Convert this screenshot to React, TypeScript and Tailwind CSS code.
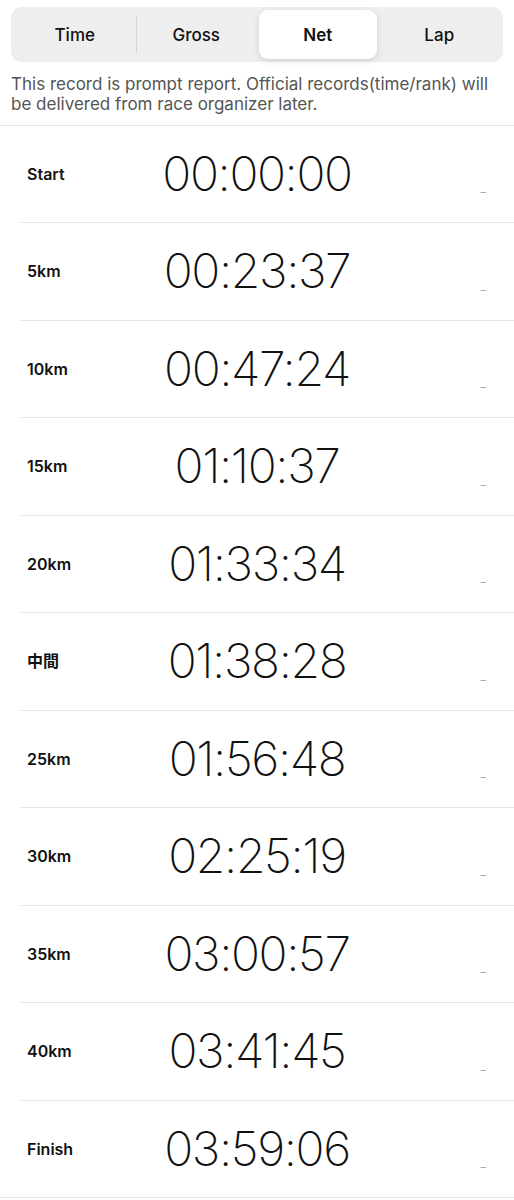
import { useState } from 'react';

const tabs = ['Time', 'Gross', 'Net', 'Lap'];

const splits = [
    { label: 'Start', time: '00:00:00' },
    { label: '5km', time: '00:23:37' },
    { label: '10km', time: '00:47:24' },
    { label: '15km', time: '01:10:37' },
    { label: '20km', time: '01:33:34' },
    { label: '中間', time: '01:38:28' },
    { label: '25km', time: '01:56:48' },
    { label: '30km', time: '02:25:19' },
    { label: '35km', time: '03:00:57' },
    { label: '40km', time: '03:41:45' },
    { label: 'Finish', time: '03:59:06' },
];

export default function App() {
    const [active, setActive] = useState('Net');

    return (
        <div className="w-[514px] bg-white text-[#111] font-['Inter','Noto_Sans_CJK_JP',sans-serif]">
            {/* Segmented control */}
            <div className="px-[11px] pt-[7px]">
                <div className="grid grid-cols-4 h-[55px] p-[3px] rounded-[11px] bg-[#eeeeef]">
                    {tabs.map((tab, i) => (
                        <div key={tab} className="relative flex">
                            {i === 1 && (
                                <div className="absolute left-0 top-[6px] bottom-[6px] w-px bg-[#d4d4d6]" />
                            )}
                            <button
                                onClick={() => setActive(tab)}
                                className={`flex-1 mx-[2px] pt-[3px] rounded-[9px] text-[17px] ${active === tab ? 'bg-white font-semibold shadow-[0_2px_6px_rgba(0,0,0,0.12)]' : 'font-medium'}`}
                            >
                                {tab}
                            </button>
                        </div>
                    ))}
                </div>
            </div>

            {/* Notice */}
            <p className="px-[11px] pt-[12px] pb-[11px] text-[17px] leading-[20px] text-[#555]">
                This record is prompt report. Official records(time/rank) will be delivered from race organizer later.
            </p>

            {/* Splits */}
            <div className="border-t border-b border-[#e4e4e4]">
                {splits.map((s, i) => (
                    <div key={s.label}>
                        {i > 0 && <div className="ml-[21px] h-px bg-[#e4e4e4]" />}
                        <div className={`grid grid-cols-[1fr_auto_1fr] items-center ${i > 0 ? 'h-[96.5px]' : 'h-[96px]'}`}>
                            <div className="pl-[27px] text-[16px] font-semibold">{s.label}</div>
                            <div className="text-center text-[48px] font-extralight tracking-[-1.4px]">{s.time}</div>
                            <div className="self-end mb-[24px] pr-[28px] text-right text-[11px] leading-[11px] text-[#aaa]">–</div>
                        </div>
                    </div>
                ))}
            </div>
        </div>
    );
}
